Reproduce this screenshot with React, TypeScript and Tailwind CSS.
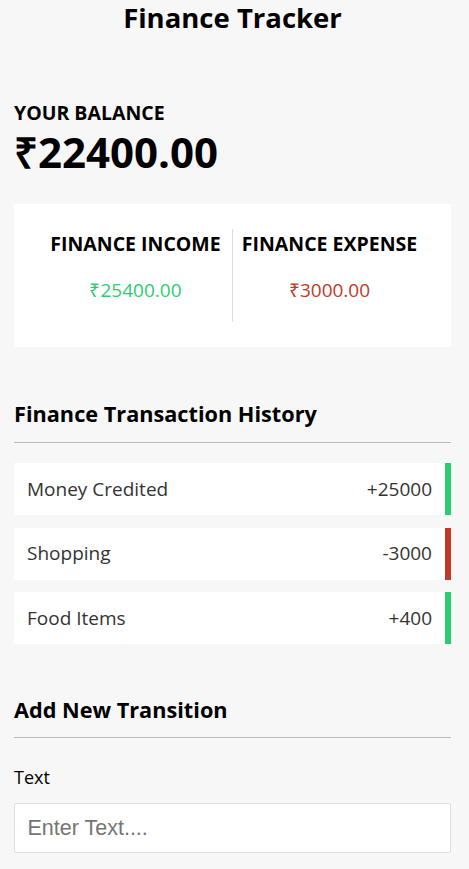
const transactions = [
  { id: 1, text: "Money Credited", amount: 25000 },
  { id: 2, text: "Shopping", amount: -3000 },
  { id: 3, text: "Food Items", amount: 400 },
];

export default function App() {
  const amounts = transactions.map((t) => t.amount);
  const total = amounts.reduce((a, b) => a + b, 0).toFixed(2);
  const income = amounts.filter((a) => a > 0).reduce((a, b) => a + b, 0).toFixed(2);
  const expense = Math.abs(amounts.filter((a) => a < 0).reduce((a, b) => a + b, 0)).toFixed(2);

  return (
    <div className="min-h-screen bg-[#f7f7f7] font-['Open_Sans',sans-serif] text-black">
      <div className="ml-[14px] w-[437px]">
        <h1 className="pt-[2px] text-center text-[27.5px] font-bold leading-[32px]">Finance Tracker</h1>

        <h4 className="mt-[67px] text-[19.5px] font-bold uppercase leading-[24px]">Your Balance</h4>
        <h1 className="mt-[3px] text-[42px] font-bold leading-[48px]">₹{total}</h1>

        {/* Income / expense card */}
        <div className="mt-[28px] flex bg-white px-[25px] py-[25px]">
          <div className="h-[93px] flex-1 border-r border-[#dedede] pt-[2px] text-center">
            <h4 className="text-[19.5px] font-bold uppercase leading-[25px]">Finance Income</h4>
            <p className="mt-[21px] text-[19px] leading-[26px] text-[#2ecc71]">₹{income}</p>
          </div>
          <div className="h-[93px] flex-1 pt-[2px] text-center">
            <h4 className="text-[19.5px] font-bold uppercase leading-[25px]">Finance Expense</h4>
            <p className="mt-[21px] text-[19px] leading-[26px] text-[#c0392b]">₹{expense}</p>
          </div>
        </div>

        <h3 className="mt-[53px] border-b border-[#bbb] pb-[14px] text-[21.7px] font-bold leading-[28px]">
          Finance Transaction History
        </h3>
        <ul className="mt-[20px] flex flex-col gap-[12.5px]">
          {transactions.map((t) => (
            <li
              key={t.id}
              className={`flex h-[52px] items-center justify-between bg-white pl-[13px] pr-[13px] text-[19px] leading-[27px] text-[#333] border-r-[6px] ${
                t.amount < 0 ? "border-[#c0392b]" : "border-[#2ecc71]"
              }`}
            >
              {t.text}
              <span>
                {t.amount < 0 ? "-" : "+"}
                {Math.abs(t.amount)}
              </span>
            </li>
          ))}
        </ul>

        <h3 className="mt-[52px] border-b border-[#bbb] pb-[13px] text-[21.7px] font-bold leading-[28px]">
          Add New Transition
        </h3>
        <form>
          <label className="mt-[27px] block text-[18px] leading-[24px]">Text</label>
          <input
            type="text"
            placeholder="Enter Text...."
            className="mt-[14px] block w-full rounded-[2px] border border-[#dedede] bg-white px-[12.5px] py-[12px] font-['Liberation_Sans',Arial,sans-serif] text-[21.5px] leading-[24px] placeholder:text-[#757575]"
          />
        </form>
      </div>
    </div>
  );
}
